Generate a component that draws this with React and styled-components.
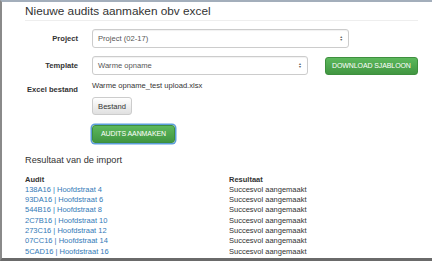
import React from "react";
import styled, { createGlobalStyle } from "styled-components";

const GlobalStyle = createGlobalStyle`
  html, body {
    margin: 0;
    padding: 0;
    background: #fff;
  }
  body {
    font-family: "Liberation Sans", Arial, sans-serif;
    color: #333;
  }
`;

const Frame = styled.div`
  width: 432px;
  height: 261px;
  box-sizing: border-box;
  border-top: 2px solid #a3aebb;
  border-left: 2px solid #8a8a8a;
  border-bottom: 3px solid #6a6a6a;
  overflow: hidden;
  padding: 3px 14px 0 23px;
`;

const Title = styled.h2`
  margin: 0;
  font-size: 11.8px;
  font-weight: 400;
  color: #333;
  line-height: 13px;
  padding-bottom: 2px;
  border-bottom: 1px solid #eee;
`;

const Form = styled.div`
  display: flex;
  flex-direction: column;
  padding-top: 8px;
`;

const Row = styled.div`
  display: flex;
  align-items: ${(p) => p.$align || "center"};
  margin-bottom: ${(p) => p.$gap || 8}px;
`;

const Label = styled.div`
  width: 53px;
  flex: none;
  text-align: right;
  font-size: 7.6px;
  line-height: 10px;
  font-weight: 700;
  color: #333;
  margin-right: 14px;
  margin-top: ${(p) => p.$top || 0}px;
`;

const Select = styled.div`
  width: ${(p) => p.$width}px;
  height: 19px;
  box-sizing: border-box;
  border: 1px solid #ccc;
  border-radius: 3px;
  display: flex;
  align-items: center;
  justify-content: space-between;
  padding: 0 5px 0 5px;
  font-size: 7.6px;
  color: #555;
  background: #fff;
  box-shadow: inset 0 1px 1px rgba(0, 0, 0, 0.06);
`;

const Arrows = styled.span`
  display: flex;
  flex-direction: column;
  font-size: 3.5px;
  line-height: 3px;
  color: #666;
`;

const GreenButton = styled.button`
  font-family: inherit;
  font-size: 7px;
  color: #fff;
  text-transform: uppercase;
  white-space: nowrap;
  border: 1px solid #3e8f3e;
  border-radius: 3px;
  background: linear-gradient(#5cb85c, #419641);
  padding: 0 6px;
  width: ${(p) => p.$width}px;
  height: 18px;
  margin-left: ${(p) => p.$offset || 0}px;
  box-shadow: ${(p) => (p.$focus ? "0 0 0 1.5px #5b9dd9" : "none")};
  letter-spacing: -0.1px;
`;

const FileCol = styled.div`
  display: flex;
  flex-direction: column;
  align-items: flex-start;
  gap: 6px;
`;

const FileName = styled.div`
  font-size: 7.6px;
  line-height: 10px;
  color: #333;
`;

const DefaultButton = styled.button`
  font-family: inherit;
  font-size: 7.6px;
  color: #333;
  border: 1px solid #ccc;
  border-radius: 3px;
  background: linear-gradient(#fff, #e0e0e0);
  height: 18px;
  width: 40px;
  padding: 0;
`;

const Indent = styled.div`
  padding-left: 67px;
`;

const Subtitle = styled.h3`
  margin: 12px 0 0;
  font-size: 9.2px;
  line-height: 11px;
  font-weight: 400;
  color: #333;
`;

const Table = styled.div`
  margin-top: 9px;
  display: grid;
  grid-template-columns: 204px 1fr;
  font-size: 7.5px;
  line-height: 10.33px;
`;

const Head = styled.div`
  font-weight: 700;
  color: #333;
`;

const Link = styled.a`
  color: #337ab7;
  text-decoration: none;
`;

const Cell = styled.div`
  color: #333;
`;

const rows = [
  ["138A16", "Hoofdstraat 4"],
  ["93DA16", "Hoofdstraat 6"],
  ["544B16", "Hoofdstraat 8"],
  ["2C7B16", "Hoofdstraat 10"],
  ["273C16", "Hoofdstraat 12"],
  ["07CC16", "Hoofdstraat 14"],
  ["5CAD16", "Hoofdstraat 16"],
];

const App = () => {
  return (
    <>
      <GlobalStyle />
      <Frame>
        <Title>Nieuwe audits aanmaken obv excel</Title>
        <Form>
          <Row>
            <Label>Project</Label>
            <Select $width={257}>
              Project (02-17)
              <Arrows>
                <span>▲</span>
                <span>▼</span>
              </Arrows>
            </Select>
          </Row>
          <Row $gap={6}>
            <Label>Template</Label>
            <Select $width={223}>
              Warme opname
              <Arrows>
                <span>▲</span>
                <span>▼</span>
              </Arrows>
            </Select>
            <GreenButton $offset={17} $width={96}>
              Download sjabloon
            </GreenButton>
          </Row>
          <Row $align="flex-start" $gap={7}>
            <Label $top={4}>Excel bestand</Label>
            <FileCol>
              <FileName>Warme opname_test upload.xlsx</FileName>
              <DefaultButton>Bestand</DefaultButton>
            </FileCol>
          </Row>
          <Indent>
            <GreenButton $focus $width={83}>
              Audits aanmaken
            </GreenButton>
          </Indent>
        </Form>
        <Subtitle>Resultaat van de import</Subtitle>
        <Table>
          <Head>Audit</Head>
          <Head>Resultaat</Head>
          {rows.map(([code, street]) => (
            <React.Fragment key={code}>
              <Link href="#">
                {code} | {street}
              </Link>
              <Cell>Succesvol aangemaakt</Cell>
            </React.Fragment>
          ))}
        </Table>
      </Frame>
    </>
  );
};

export default App;
